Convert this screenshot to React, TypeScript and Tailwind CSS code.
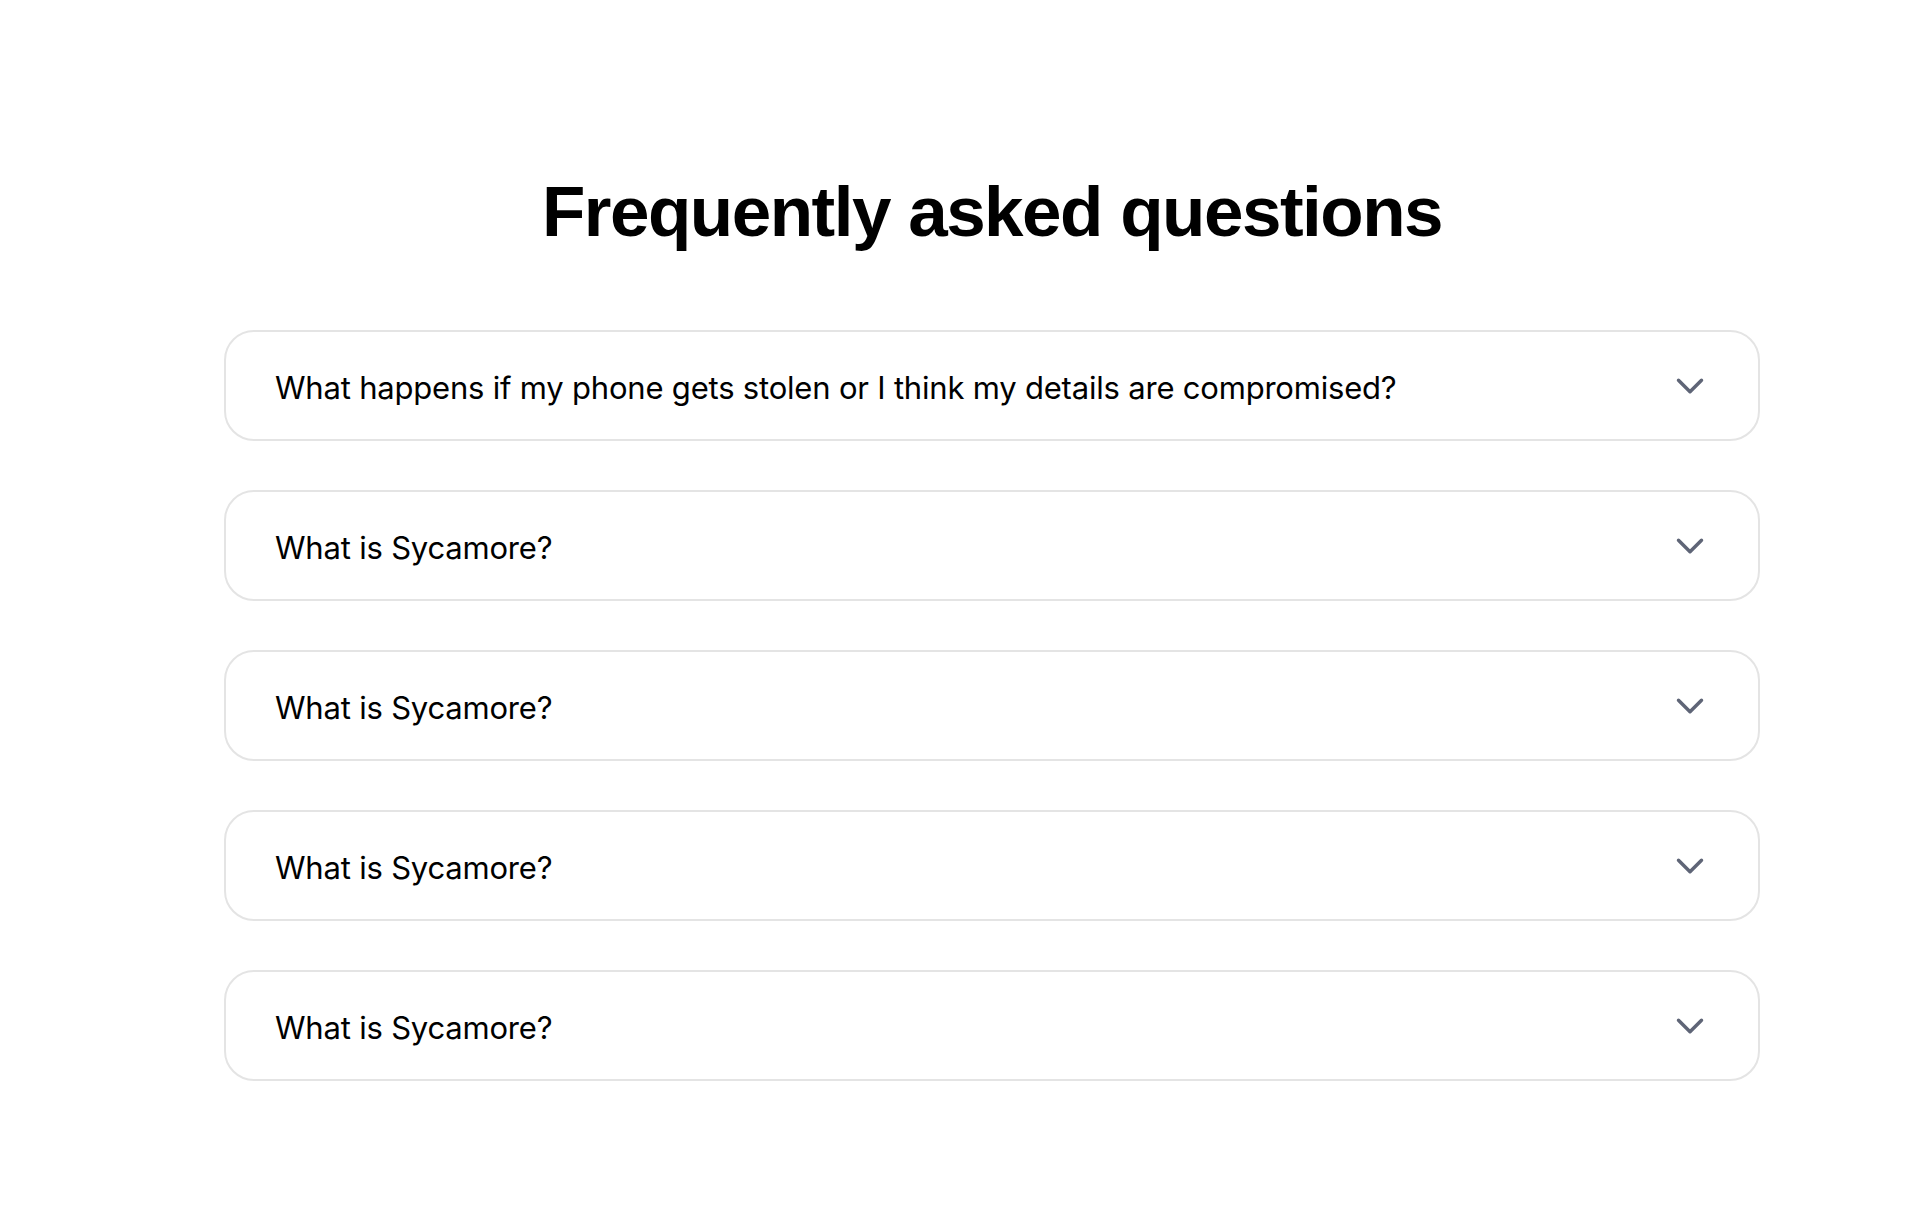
import { ChevronDown } from 'lucide-react';

const questions = [
  'What happens if my phone gets stolen or I think my details are compromised?',
  'What is Sycamore?',
  'What is Sycamore?',
  'What is Sycamore?',
  'What is Sycamore?',
];

function FaqItem({ question }: { question: string }) {
  return (
    <button
      type="button"
      className="flex h-[111px] w-full items-center justify-between rounded-[30px] border-2 border-[#e4e4e4] bg-white pl-[49px] pr-[45px] text-left"
    >
      <span className="pt-[5px] text-[31px] font-normal tracking-[-0.2px] text-black">{question}</span>
      <ChevronDown className="size-[46px] text-[#5f6577]" strokeWidth={1.8} />
    </button>
  );
}

export default function App() {
  return (
    <div className="min-h-screen bg-white pl-[60px] font-['Inter',sans-serif]">
      <div className="mx-auto flex w-[1536px] flex-col items-center pt-[162px]">
        <h1 className="font-['Liberation_Sans',sans-serif] text-[71px] font-bold leading-[100px] tracking-[-1.5px] text-black">
          Frequently asked questions
        </h1>
        <div className="mt-[68px] flex w-full flex-col gap-[49px]">
          {questions.map((q, i) => (
            <FaqItem key={i} question={q} />
          ))}
        </div>
      </div>
    </div>
  );
}
